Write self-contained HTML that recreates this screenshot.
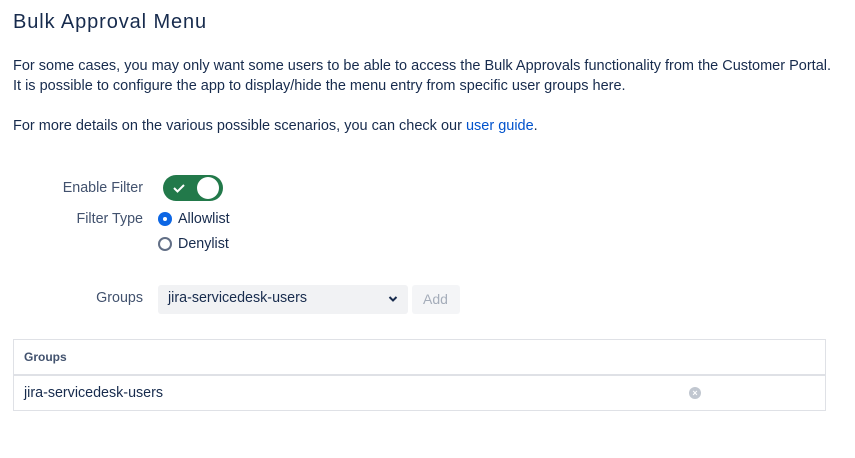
<!DOCTYPE html>
<html><head><style>
body{margin:0;background:#fff;font-family:"Liberation Sans",sans-serif;color:#172b4d;width:855px;height:458px;position:relative;overflow:hidden}
.a{position:absolute;white-space:nowrap}
p{margin:0}
</style></head><body>
<div class="a" style="left:13px;top:11px;font-size:20px;letter-spacing:0.9px;color:#172b4d">Bulk Approval Menu</div>
<div class="a" style="left:13px;top:56px;font-size:14.5px;line-height:20px">For some cases, you may only want some users to be able to access the Bulk Approvals functionality from the Customer Portal.<br>It is possible to configure the app to display/hide the menu entry from specific user groups here.</div>
<div class="a" style="left:13px;top:116px;font-size:14.5px;line-height:20px">For more details on the various possible scenarios, you can check our <span style="color:#0052cc">user guide</span>.</div>
<div class="a" style="right:712px;top:180px;font-size:14.3px;color:#42526e">Enable Filter</div>
<div class="a" style="left:163px;top:175px;width:60px;height:26px;border-radius:13px;background:#22794a"></div>
<div class="a" style="left:197px;top:177px;width:22px;height:22px;border-radius:50%;background:#fff"></div>
<svg class="a" style="left:172px;top:181px" width="14" height="14"><path d="M2 7l3.5 3.5L12 4" stroke="#fff" stroke-width="2" fill="none"/></svg>
<div class="a" style="right:712px;top:211px;font-size:14.3px;color:#42526e">Filter Type</div>
<div class="a" style="left:158px;top:212px;width:14px;height:14px;border-radius:50%;background:#0c66e4"></div>
<div class="a" style="left:163px;top:217px;width:4px;height:4px;border-radius:50%;background:#fff"></div>
<div class="a" style="left:178px;top:211px;font-size:14.3px">Allowlist</div>
<div class="a" style="left:158px;top:237px;width:10px;height:10px;border-radius:50%;border:2px solid #626f86"></div>
<div class="a" style="left:178px;top:236px;font-size:14.3px">Denylist</div>
<div class="a" style="right:712px;top:290px;font-size:14.3px;color:#42526e">Groups</div>
<div class="a" style="left:158px;top:285px;width:250px;height:29px;border-radius:3px;background:#f1f2f4"></div>
<div class="a" style="left:168px;top:290px;font-size:14.3px">jira-servicedesk-users</div>
<svg class="a" style="left:388px;top:295px" width="10" height="8"><path d="M1.5 2l3.5 3.5L8.5 2" stroke="#172b4d" stroke-width="2" fill="none"/></svg>
<div class="a" style="left:412px;top:285px;width:48px;height:29px;border-radius:3px;background:#f4f5f7"></div>
<div class="a" style="left:423px;top:291px;font-size:14px;color:#a5adba">Add</div>
<div class="a" style="left:13px;top:339px;width:811px;height:34px;border:1px solid #dfe1e6;border-bottom:2px solid #dfe1e6"></div>
<div class="a" style="left:24px;top:350px;font-size:12px;color:#42526e;font-weight:bold">Groups</div>
<div class="a" style="left:13px;top:375px;width:811px;height:34px;border:1px solid #dfe1e6"></div>
<div class="a" style="left:24px;top:385px;font-size:14.3px">jira-servicedesk-users</div>
<div class="a" style="left:689px;top:387px;width:12px;height:12px;border-radius:50%;background:#c1c7d0;color:#fff;font-size:9px;line-height:12px;text-align:center;font-weight:bold">×</div>
</body></html>
